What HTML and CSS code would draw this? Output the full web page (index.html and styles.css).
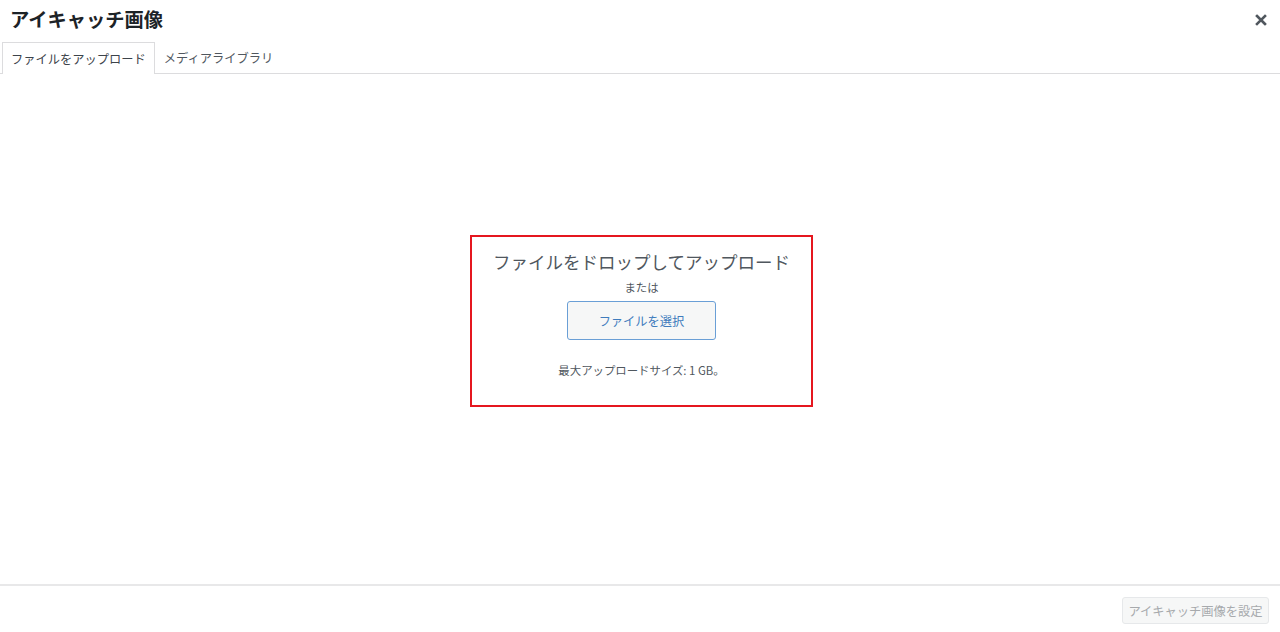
FILE: index.html
```html
<!DOCTYPE html>
<html lang="ja">
<head>
<meta charset="utf-8">
<title>アイキャッチ画像</title>
<link rel="stylesheet" href="styles.css">
</head>
<body>
<div class="modal">
  <header class="head">
    <div class="title-row">
      <h1 class="title">アイキャッチ画像</h1>
      <button class="close" aria-label="閉じる">
        <svg width="12" height="12" viewBox="0 0 12 12"><path d="M2 2 L10 10 M10 2 L2 10" stroke="#50575e" stroke-width="2.6" stroke-linecap="square"/></svg>
      </button>
    </div>
    <nav class="tabs">
      <span class="tab active">ファイルをアップロード</span>
      <span class="tab">メディアライブラリ</span>
    </nav>
  </header>
  <main class="content">
    <div class="drop">
      <h2 class="drop-title">ファイルをドロップしてアップロード</h2>
      <p class="or">または</p>
      <button class="select">ファイルを選択</button>
      <p class="max">最大アップロードサイズ: 1 GB。</p>
    </div>
  </main>
  <footer class="foot">
    <button class="set" disabled>アイキャッチ画像を設定</button>
  </footer>
</div>
</body>
</html>
```

FILE: styles.css
```css
* { box-sizing: border-box; }
html, body { margin: 0; padding: 0; background: #fff; }
body {
  font-family: "Noto Sans CJK JP", "Noto Sans", "Liberation Sans", sans-serif;
  color: #1d2327;
}
.modal {
  width: 1280px;
  height: 632px;
  display: flex;
  flex-direction: column;
}
.head {
  height: 74px;
  border-bottom: 1px solid #dcdcde;
  display: flex;
  flex-direction: column;
}
.title-row {
  height: 43px;
  display: flex;
  align-items: center;
  justify-content: space-between;
  padding: 0 11px 0 10px;
}
.title {
  margin: 0;
  font-size: 19.25px;
  font-weight: 700;
  line-height: 1;
  color: #1d2327;
  position: relative;
  top: -1px;
}
.close {
  border: 0;
  background: none;
  padding: 0;
  width: 16px;
  height: 16px;
  display: flex;
  align-items: center;
  justify-content: center;
  position: relative;
  top: -1px;
}
.tabs {
  display: flex;
  padding-left: 2px;
  height: 31px;
}
.tab {
  font-size: 12.25px;
  color: #50575e;
  padding: 0 8px;
  display: flex;
  align-items: center;
  height: 31px;
  border: 1px solid transparent;
  border-bottom: 0;
}
.tab.active {
  border-color: #dcdcde;
  background: #fff;
  color: #3c434a;
  height: 32px;
  margin-bottom: -1px;
}
.content {
  flex: 1;
  display: flex;
  justify-content: center;
  align-items: flex-start;
  padding-top: 161px;
  padding-left: 3px;
}
.drop {
  width: 343px;
  height: 172px;
  border: 2px solid #e5171f;
  display: flex;
  flex-direction: column;
  align-items: center;
  padding-top: 12px;
}
.drop-title {
  margin: 0;
  font-size: 17.5px;
  font-weight: 400;
  line-height: 26px;
  color: #50575e;
}
.or {
  margin: 4px 0 0;
  font-size: 11.4px;
  line-height: 16px;
  color: #50575e;
}
.select {
  margin-top: 6px;
  width: 149px;
  height: 39px;
  border: 1px solid #6a9fd6;
  border-radius: 3px;
  background: #f6f7f7;
  color: #3f7cbd;
  font-family: inherit;
  font-size: 12.25px;
  padding: 0;
}
.max {
  margin: 22px 0 0;
  font-size: 11.4px;
  line-height: 16px;
  color: #50575e;
}
.foot {
  height: 48px;
  border-top: 2px solid #e8e8e9;
  display: flex;
  justify-content: flex-end;
  align-items: flex-start;
  padding: 11px 11px 0 0;
}
.set {
  width: 147px;
  height: 27px;
  border: 1px solid #e6e8ea;
  border-radius: 3px;
  background: #f6f7f7;
  color: #a7aaad;
  font-family: inherit;
  font-size: 12.25px;
  padding: 0;
}
```
